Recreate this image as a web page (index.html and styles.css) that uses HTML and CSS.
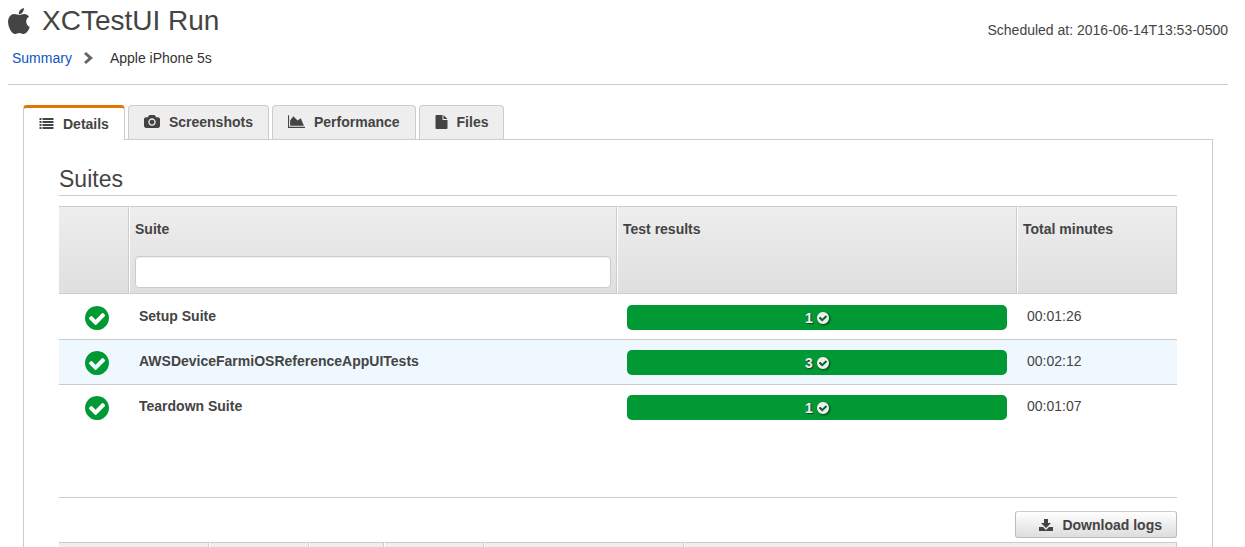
FILE: index.html
```html
<!DOCTYPE html>
<html lang="en">
<head>
  <meta charset="UTF-8" />
  <meta name="viewport" content="width=device-width, initial-scale=1.0" />
  <title>XCTestUI Run</title>
  <link rel="stylesheet" href="styles.css">
</head>
<body>
  <!-- icon shapes -->
  <svg class="sprite" aria-hidden="true">
    <symbol id="check" viewBox="128 128 1536 1536">
      <path d="M1412 734q0-28-18-46l-91-90q-19-19-45-19t-45 19l-408 407-226-226q-19-19-45-19t-45 19l-91 90q-18 18-18 46 0 27 18 45l362 362q19 19 45 19 27 0 46-19l543-543q18-18 18-45zm252 162q0 209-103 385.500t-279.500 279.500-385.500 103-385.500-103-279.500-279.500-103-385.500 103-385.500 279.500-279.500 385.500-103 385.500 103 279.500 279.500 103 385.500z"/>
    </symbol>
  </svg>

  <header class="page-header">
    <div>
      <h1>
        <svg class="icon-apple" viewBox="192 0 1408 1664"><path d="M1585 1215q-39 125-123 250-129 196-257 196-49 0-140-32-86-32-151-32-61 0-142 33-81 34-132 34-152 0-301-259-147-261-147-503 0-228 113-374 113-144 284-144 72 0 177 30 104 30 138 30 45 0 143-34 102-34 173-34 119 0 213 65 52 36 104 100-79 67-114 118-65 94-65 207 0 124 69 223t158 126zm-376-1173q0 61-29 136-30 75-93 138-54 54-108 72-37 11-104 17 3-149 78-257 74-107 250-148 1 3 2.500 11t2.500 11q0 4 .5 10t.5 10z"/></svg>
        XCTestUI Run
      </h1>
      <nav class="breadcrumb">
        <a href="#">Summary</a>
        <svg class="icon-chevron" viewBox="0 0 9 12"><path d="M0 2L2 0L9 6L2 12L0 10L4.500 6z"/></svg>
        <span>Apple iPhone 5s</span>
      </nav>
    </div>
    <div class="scheduled">Scheduled at: 2016-06-14T13:53-0500</div>
  </header>

  <main>
    <nav class="tabs">
      <a class="tab active" href="#details">
        <svg class="icon-tab" viewBox="0 0 14 12"><path d="M0 0h2v2H0zM3 0h11v2H3zM0 3h2v2H0zM3 3h11v2H3zM0 6h2v2H0zM3 6h11v2H3zM0 9h2v2H0zM3 9h11v2H3z"/></svg>
        Details
      </a>
      <a class="tab" href="#screenshots">
        <svg class="icon-tab wide" viewBox="-64 128 1920 1536"><path d="M896 672q119 0 203.500 84.500t84.500 203.500-84.500 203.500-203.500 84.500-203.500-84.500-84.500-203.500 84.500-203.500 203.500-84.500zm704-288q106 0 181 75t75 181v768q0 106-75 181t-181 75h-1408q-106 0-181-75t-75-181v-768q0-106 75-181t181-75h224l51-136q19-49 69.500-84.500t103.500-35.500h512q53 0 103.500 35.500t69.500 84.500l51 136h224zm-704 1024q185 0 316.500-131.500t131.500-316.500-131.500-316.500-316.500-131.500-316.500 131.500-131.500 316.500 131.500 316.500 316.500 131.500z"/></svg>
        Screenshots
      </a>
      <a class="tab" href="#performance">
        <svg class="icon-tab chart" viewBox="0 0 16 12"><path d="M0 0h1v11h15v1H0zM2 10V5l3-4 4 4 3-2 3 7z"/></svg>
        Performance
      </a>
      <a class="tab" href="#files">
        <svg class="icon-tab file" viewBox="0 0 12 14"><path d="M0 1Q0 0 1 0h6v5h5v8q0 1-1 1H1q-1 0-1-1zM8 0l4 4H8z"/></svg>
        Files
      </a>
    </nav>

    <section class="panel">
      <h2>Suites</h2>
      <table class="suites">
        <colgroup>
          <col class="col-status">
          <col>
          <col class="col-results">
          <col class="col-minutes">
        </colgroup>
        <thead>
          <tr>
            <th></th>
            <th><label for="suite-filter">Suite</label><input type="text" id="suite-filter"></th>
            <th>Test results</th>
            <th>Total minutes</th>
          </tr>
        </thead>
        <tbody>
          <tr>
            <td class="status"><svg><use href="#check"/></svg></td>
            <td class="name">Setup Suite</td>
            <td><div class="bar">1 <svg><use href="#check"/></svg></div></td>
            <td>00:01:26</td>
          </tr>
          <tr>
            <td class="status"><svg><use href="#check"/></svg></td>
            <td class="name">AWSDeviceFarmiOSReferenceAppUITests</td>
            <td><div class="bar">3 <svg><use href="#check"/></svg></div></td>
            <td>00:02:12</td>
          </tr>
          <tr>
            <td class="status"><svg><use href="#check"/></svg></td>
            <td class="name">Teardown Suite</td>
            <td><div class="bar">1 <svg><use href="#check"/></svg></div></td>
            <td>00:01:07</td>
          </tr>
        </tbody>
      </table>

      <div class="actions">
        <button type="button">
          <svg class="icon-download" viewBox="0 0 14 12"><path d="M5 0h4v4h3L7 9 2 4h3zM0 8h4l3 3 3-3h4v4H0z"/></svg>
          Download logs
        </button>
      </div>

      <table class="logs">
        <colgroup>
          <col class="col-150">
          <col class="col-100">
          <col class="col-75">
          <col class="col-100">
          <col class="col-200">
          <col>
        </colgroup>
        <thead>
          <tr><th></th><th></th><th></th><th></th><th></th><th></th></tr>
        </thead>
      </table>
    </section>
  </main>
</body>
</html>
```

FILE: styles.css
```css
* {
  box-sizing: border-box;
}
body {
  margin: 0 17px 0 8px;
  font-family: "Liberation Sans", Arial, sans-serif;
  font-size: 14px;
  line-height: 20px;
  color: #444;
  background-color: #fff;
}
svg {
  fill: currentColor;
  flex: none;
}
.sprite {
  display: none;
}
.page-header {
  display: flex;
  justify-content: space-between;
  height: 85px;
  border-bottom: 1px solid #ccc;
}
h1 {
  display: flex;
  align-items: center;
  gap: 12px;
  margin: 6px 0 12px;
  font-size: 28px;
  line-height: 30px;
  font-weight: normal;
}
.icon-apple {
  width: 22px;
  height: 26px;
}
.breadcrumb {
  display: flex;
  align-items: center;
  padding-left: 4px;
  color: #333;
}
.breadcrumb a {
  color: #1155bb;
  text-decoration: none;
}
.icon-chevron {
  width: 9px;
  height: 12px;
  margin: 0 17px 0 12px;
  color: #666;
}
.scheduled {
  margin-top: 20px;
}
main {
  margin: 20px 15px 0;
}
.tabs {
  display: flex;
  gap: 3px;
}
.tab {
  display: flex;
  align-items: center;
  gap: 9px;
  height: 34px;
  padding: 0 15px 2px;
  border: 1px solid #ccc;
  border-bottom: 0;
  border-radius: 4px 4px 0 0;
  background-color: #eee;
  color: #444;
  font-weight: bold;
  text-decoration: none;
}
.tab.active {
  height: 35px;
  margin-bottom: -1px;
  padding-bottom: 0;
  border-top: 3px solid #e07700;
  background-color: #fff;
  z-index: 1;
}
.icon-tab {
  width: 15px;
  height: 12px;
}
.icon-tab.wide {
  width: 16px;
  height: 13px;
}
.icon-tab.chart {
  width: 17px;
  height: 13px;
}
.icon-tab.file {
  width: 13px;
  height: 14px;
}
.panel {
  padding: 26px 35px 0;
  border: 1px solid #ccc;
  border-bottom: 0;
}
h2 {
  margin: 0 0 10px;
  padding-bottom: 3px;
  border-bottom: 1px solid #ccc;
  font-size: 23px;
  line-height: 26px;
  font-weight: normal;
}
table {
  width: 100%;
  table-layout: fixed;
  border-spacing: 0;
}
th {
  padding: 12px 5px 5px;
  border: 1px solid #ccc;
  border-left-color: #fff;
  text-align: left;
  vertical-align: top;
}
th:first-child {
  border-left: 0;
}
thead {
  background: linear-gradient(#eee, #dfdfdf);
}
.col-status {
  width: 70px;
}
.col-results {
  width: 400px;
}
.col-minutes {
  width: 160px;
}
th label {
  display: block;
}
th input {
  display: block;
  width: 100%;
  height: 32px;
  margin-top: 17px;
  padding: 4px 8px;
  border: 1px solid #ccc;
  border-radius: 4px;
  box-shadow: inset 0 1px 1px #eee;
  font: inherit;
}
td {
  padding: 10px 10px 9px;
  border-bottom: 1px solid #ccc;
  line-height: 22px;
  vertical-align: top;
}
tbody tr:first-child td {
  padding-top: 11px;
}
tbody tr:last-child td {
  border-bottom: 0;
}
tbody tr:nth-child(even) {
  background-color: #f0f8ff;
}
.name {
  font-weight: bold;
}
.status {
  padding-left: 26px;
  color: #093;
}
.status svg {
  display: block;
  width: 24px;
  height: 24px;
  margin-top: 1px;
}
.bar {
  display: flex;
  align-items: center;
  justify-content: center;
  gap: 4px;
  height: 25px;
  border-radius: 5px;
  background-color: #093;
  color: #eee;
  font-weight: bold;
  text-shadow: 1px 1px 1px #333;
}
.bar svg {
  width: 12px;
  height: 12px;
  filter: drop-shadow(1px 1px 1px rgba(0, 0, 0, 0.6));
}
.actions {
  display: flex;
  justify-content: flex-end;
  margin-top: 68px;
  padding: 13px 0 4px;
  border-top: 1px solid #ccc;
}
button {
  display: flex;
  align-items: center;
  gap: 9px;
  height: 27px;
  padding: 0 14px 0 23px;
  border: 1px solid #bbb;
  border-top-color: #ccc;
  border-radius: 3px;
  background: linear-gradient(#fff, #ddd);
  color: #444;
  font: inherit;
  font-weight: bold;
}
.icon-download {
  width: 14px;
  height: 12px;
}
.logs th {
  height: 5px;
  padding: 0;
  border-bottom: 0;
}
.logs thead {
  background: #eee;
}
.col-75 {
  width: 75px;
}
.col-100 {
  width: 100px;
}
.col-150 {
  width: 150px;
}
.col-200 {
  width: 200px;
}
```
